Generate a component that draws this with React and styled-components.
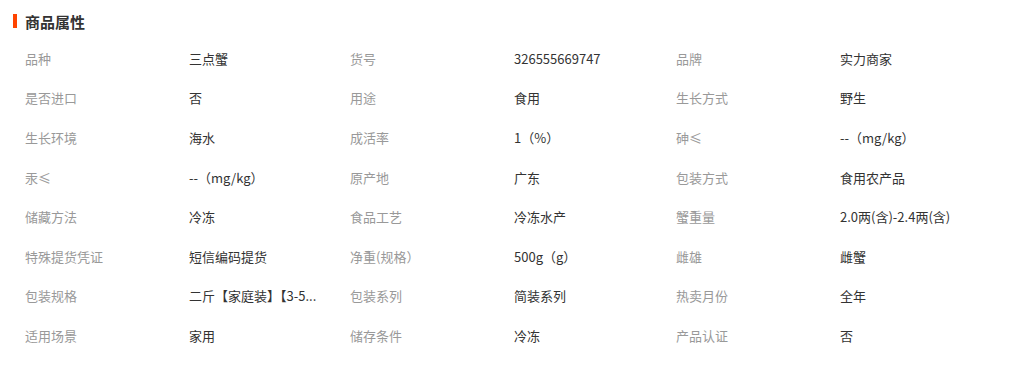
import React from 'react'
import styled, { createGlobalStyle } from 'styled-components';

const GlobalStyle = createGlobalStyle`
  body {
    margin: 0;
    background: #fff;
    font-family: "Noto Sans CJK SC", "Liberation Sans", sans-serif;
  }
`;

// 상품 속성 목록 (라벨, 값) - 잘린 값은 화면에 보이는 그대로
const attrs = [
  ['品种', '三点蟹'], ['货号', '326555669747'], ['品牌', '实力商家'],
  ['是否进口', '否'], ['用途', '食用'], ['生长方式', '野生'],
  ['生长环境', '海水'], ['成活率', '1（%）'], ['砷≤', '--（mg/kg）'],
  ['汞≤', '--（mg/kg）'], ['原产地', '广东'], ['包装方式', '食用农产品'],
  ['储藏方法', '冷冻'], ['食品工艺', '冷冻水产'], ['蟹重量', '2.0两(含)-2.4两(含)'],
  ['特殊提货凭证', '短信编码提货'], ['净重(规格）', '500g（g）'], ['雌雄', '雌蟹'],
  ['包装规格', '二斤【家庭装】【3-5...'], ['包装系列', '简装系列'], ['热卖月份', '全年'],
  ['适用场景', '家用'], ['储存条件', '冷冻'], ['产品认证', '否'],
];

function App() {
  return (
    <>
      <GlobalStyle />
      <Panel>
        <Title>商品属性</Title>
        <Grid>
          {attrs.map(([label, value]) => (
            <React.Fragment key={label}>
              <Label>{label}</Label>
              <Value>{value}</Value>
            </React.Fragment>
          ))}
        </Grid>
      </Panel>
    </>
  )
}

const Panel = styled.div`
  width: 1010px;
  height: 368px;
  box-sizing: border-box;
  padding: 11px 0 0 13px;
`;

const Title = styled.h3`
  margin: 0;
  height: 20px;
  display: flex;
  align-items: center;
  gap: 8px;
  font-size: 15px;
  font-weight: bold;
  color: #333;
  &::before{
    content: "";
    width: 4px;
    height: 14px;
    background: #ff4400;
  }
`;

const Grid = styled.div`
  display: grid;
  grid-template-columns: 164px 161px 164px 162px 164px 150px;
  grid-auto-rows: 39.6px;
  margin-top: 7.6px;
  padding-left: 12px;
`;

const Label = styled.div`
  display: flex;
  align-items: center;
  font-size: 13px;
  color: #999;
  white-space: nowrap;
`;

const Value = styled.div`
  display: flex;
  align-items: center;
  font-size: 13px;
  color: #333;
  white-space: nowrap;
`;

export default App
